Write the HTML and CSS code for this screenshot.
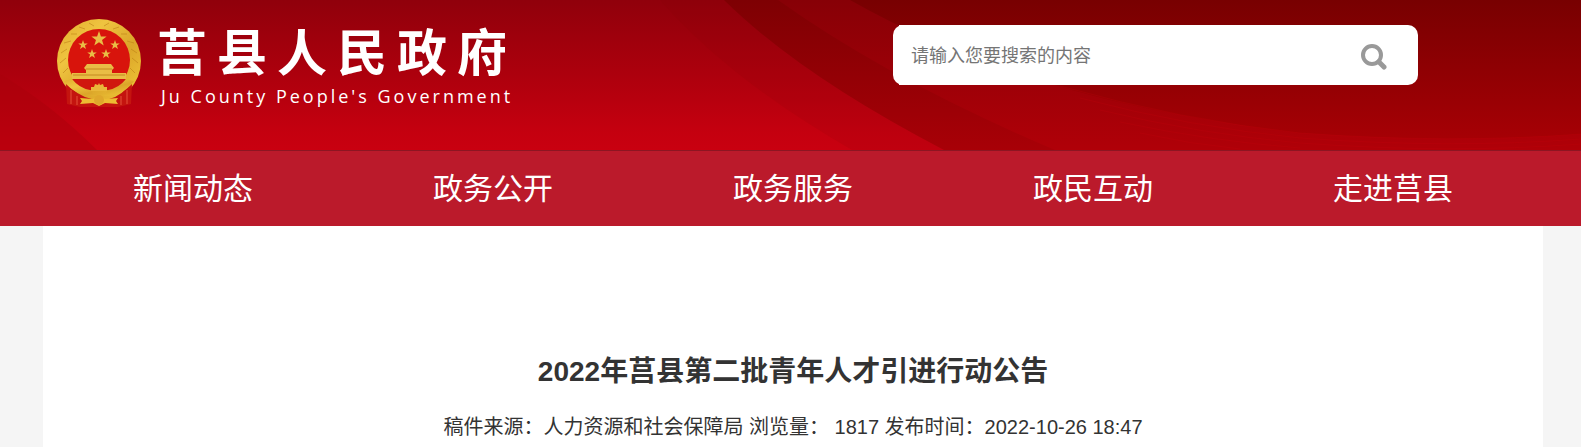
FILE: index.html
```html
<!DOCTYPE html>
<html lang="zh-CN">
<head>
<meta charset="utf-8">
<meta name="viewport" content="width=device-width, initial-scale=1">
<title>2022年莒县第二批青年人才引进行动公告</title>
<link rel="stylesheet" href="styles.css">
</head>
<body>
<header class="banner">
  <svg class="banner-art" viewBox="0 0 1581 150" preserveAspectRatio="none" aria-hidden="true">
    <defs>
      <linearGradient id="base" x1="0" y1="0" x2="0" y2="1">
        <stop offset="0" stop-color="#90000b"/>
        <stop offset="0.5" stop-color="#ad000d"/>
        <stop offset="0.85" stop-color="#c3000f"/>
        <stop offset="1" stop-color="#c90010"/>
      </linearGradient>
      <linearGradient id="band" x1="0" y1="0" x2="0" y2="1">
        <stop offset="0" stop-color="#7e0003"/>
        <stop offset="1" stop-color="#a80007"/>
      </linearGradient>
      <linearGradient id="band2" x1="0" y1="0" x2="0" y2="1">
        <stop offset="0" stop-color="#870006"/>
        <stop offset="1" stop-color="#b00008"/>
      </linearGradient>
      <linearGradient id="dark" x1="0" y1="0" x2="0" y2="1">
        <stop offset="0" stop-color="#780001"/>
        <stop offset="1" stop-color="#a60005"/>
      </linearGradient>
    </defs>
    <rect width="1581" height="150" fill="url(#base)"/>
    <path d="M0 74Q52 105 97 150H0Z" fill="#a8000c" opacity="0.45"/>
    <path d="M660 0Q730 80 852 150H1000V0Z" fill="#80000a" opacity="0.12"/>
    <path d="M724 0Q800 75 944 150H1581V0Z" fill="url(#band)"/>
    <path d="M778 0Q890 80 1055 150H1581V0Z" fill="url(#band2)"/>
    <path d="M850 0C960 62 1100 110 1300 133Q1450 144 1581 134V0Z" fill="url(#dark)"/>
    <g fill="none" stroke="#c8000c" stroke-opacity="0.22">
      <path d="M1060 86Q1180 120 1300 133Q1450 144 1581 134"/>
      <path d="M1080 98Q1190 127 1300 138Q1450 149 1581 139"/>
      <path d="M1100 110Q1200 134 1300 143Q1450 154 1581 144"/>
      <path d="M1120 122Q1210 141 1300 148"/>
      <path d="M1140 133Q1190 144 1240 149"/>
    </g>
  </svg>
  <div class="banner-inner">
    <a class="brand" href="#">
      <svg class="emblem" viewBox="0 0 84 88" aria-hidden="true">
        <defs>
          <linearGradient id="gold" x1="0" y1="0" x2="1" y2="1">
            <stop offset="0" stop-color="#e2aa2c"/>
            <stop offset="0.3" stop-color="#efc440"/>
            <stop offset="0.6" stop-color="#dba529"/>
            <stop offset="1" stop-color="#f3cc3a"/>
          </linearGradient>
          <path id="star" d="M0-1L.24-.32.95-.31.38.12.59.81 0 .4-.59.81-.38.12-.95-.31-.24-.32Z"/>
        </defs>
        <circle cx="42" cy="42" r="42" fill="url(#gold)"/>
        <circle cx="42" cy="41" r="31" fill="#d8140c"/>
        <g fill="none" stroke="#b97c14" stroke-width="1" opacity="0.55">
          <path d="M6 54L11 49M3 44L9 39M4 34L10 30M7 24L14 22M14 15L20 15M22 8L28 10M32 4L37 7M52 4L47 7M62 8L56 10M70 15L64 15M77 24L70 22M80 34L74 30M81 44L75 39M78 54L73 49"/>
        </g>
        <g fill="#e9bd45">
          <use href="#star" transform="translate(42 20) scale(8)"/>
          <use href="#star" transform="translate(26 26) scale(5)"/>
          <use href="#star" transform="translate(58 26) scale(5)"/>
          <use href="#star" transform="translate(35 35) scale(5)"/>
          <use href="#star" transform="translate(49 35) scale(5)"/>
          <path d="M30 45H54L57 49 55 51V54H69V60H15V54H29V51L27 49Z"/>
        </g>
        <path d="M29 50H55M16 56H68" stroke="#c48a20"/>
        <path d="M15 60H69Q66 68 58 72L50 71Q48 65 42 65T34 71L26 72Q18 68 15 60Z" fill="#d0170e"/>
        <path d="M9 65L14 69Q26 80 42 81T70 69L75 65 74 85 61 88H23L10 85Z" fill="#c4140f"/>
        <path d="M14 71V85M20 77V86M64 77V86M70 71V85" stroke="#e4513a" stroke-width="1"/>
        <path d="M7 62L15 60Q22 69 33 71L36 75 48 75 51 71Q62 69 69 60L77 62Q66 77 48 77L42 76 36 77Q18 77 7 62Z" fill="url(#gold)"/>
        <path d="M34 72L34 68 37 68 38 65 41 66 42 64 43 66 46 65 47 68 50 68 50 72Z" fill="#e9b83a"/>
        <path d="M23 79L36 80 42 76 48 80 61 79 59 82 61 85 48 84 42 87 36 84 23 85 25 82Z" fill="#edbc32"/>
        <circle cx="42" cy="81" r="5" fill="#dfa72b"/>
      </svg>
      <span class="brand-text">
        <span class="brand-name">莒县人民政府</span>
        <span class="brand-en">Ju County People's Government</span>
      </span>
    </a>
    <form class="search" role="search">
      <input class="search-input" type="text" placeholder="请输入您要搜索的内容" aria-label="搜索">
      <button class="search-button" type="button" aria-label="搜索">
        <svg class="search-icon" viewBox="0 0 26 26" aria-hidden="true">
          <circle cx="11" cy="11" r="9" fill="none" stroke="#999" stroke-width="4"/>
          <path d="M18 18L23 23" stroke="#999" stroke-width="5" stroke-linecap="round"/>
        </svg>
      </button>
    </form>
  </div>
</header>
<nav class="nav">
  <a class="nav-link" href="#">新闻动态</a>
  <a class="nav-link" href="#">政务公开</a>
  <a class="nav-link" href="#">政务服务</a>
  <a class="nav-link" href="#">政民互动</a>
  <a class="nav-link" href="#">走进莒县</a>
</nav>
<main class="page">
  <article class="article">
    <h1 class="title">2022年莒县第二批青年人才引进行动公告</h1>
    <p class="meta">稿件来源：人力资源和社会保障局 浏览量： 1817 发布时间：2022-10-26 18:47</p>
  </article>
</main>
</body>
</html>
```
FILE: styles.css
```css
* {
  box-sizing: border-box;
}

html,
body {
  margin: 0;
}

html {
  height: 100%;
}

body {
  display: flex;
  flex-direction: column;
  min-height: 100%;
  background: #f5f5f5;
  color: #333;
  font-family: "Liberation Sans", "Noto Sans CJK SC", sans-serif;
}

.banner {
  position: relative;
  background: #a8000c;
}

.banner-art {
  position: absolute;
  inset: 0;
  width: 100%;
  height: 100%;
}

.banner-inner {
  position: relative;
  display: flex;
  justify-content: space-between;
  align-items: flex-start;
  min-height: 150px;
  padding: 19px 163px 0 57px;
}

.brand {
  display: flex;
  gap: 16px;
  color: #fff;
  text-decoration: none;
}

.emblem {
  width: 84px;
  height: 88px;
}

.brand-text {
  display: flex;
  flex-direction: column;
  padding-top: 10px;
}

.brand-name {
  font-size: 50px;
  font-weight: 700;
  line-height: 50px;
  letter-spacing: 10px;
}

.brand-en {
  padding: 5px 0 0 4px;
  font-family: "Open Sans", "Noto Sans", sans-serif;
  font-size: 18px;
  line-height: 24px;
  letter-spacing: 3px;
}

.search {
  display: flex;
  flex: 0 1 525px;
  height: 60px;
  margin-top: 6px;
  padding-left: 6px;
  border-radius: 10px;
  background: #fff;
}

.search-input {
  flex: 1;
  min-width: 0;
  padding: 2px 12px 0;
  border: 0;
  background: #fff;
  color: #333;
  font: inherit;
  font-size: 18px;
}

.search-input::placeholder {
  color: #757575;
}

.search-button {
  display: grid;
  place-items: center;
  width: 88px;
  padding: 3px 0 0;
  border: 0;
  background: none;
}

.search-icon {
  width: 26px;
  height: 26px;
}

.nav {
  display: flex;
  padding: 0 38px 0 43px;
  border-top: 1px solid #8d1522;
  background: #bb1a2b;
}

.nav-link {
  flex: 1;
  color: #fff;
  font-size: 30px;
  line-height: 75px;
  text-align: center;
  text-decoration: none;
}

.page {
  display: flex;
  flex: 1;
  padding: 0 38px 0 43px;
}

.article {
  flex: 1;
  padding-top: 122px;
  background: #fff;
  text-align: center;
}

.title {
  margin: 0;
  font-size: 28px;
  line-height: 48px;
}

.meta {
  margin: 15px 0 0;
  font-size: 20px;
  line-height: 32px;
}
```
